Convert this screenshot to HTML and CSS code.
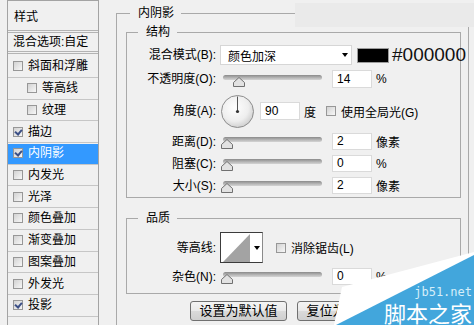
FILE: index.html
```html
<!DOCTYPE html>
<html lang="zh-CN">
<head>
    <meta charset="UTF-8">
    <title>图层样式 - 内阴影</title>
    <link rel="stylesheet" href="styles.css">
</head>
<body>
    <div class="dialog">
        <ul class="style-list">
            <li class="title">样式</li>
            <li class="title blend">混合选项:自定</li>
            <li class="bevel"><span class="cb"></span>斜面和浮雕</li>
            <li class="sub"><span class="cb"></span>等高线</li>
            <li class="sub"><span class="cb"></span>纹理</li>
            <li><span class="cb on"></span>描边</li>
            <li class="active"><span class="cb on"></span>内阴影</li>
            <li><span class="cb"></span>内发光</li>
            <li><span class="cb"></span>光泽</li>
            <li><span class="cb"></span>颜色叠加</li>
            <li><span class="cb"></span>渐变叠加</li>
            <li><span class="cb"></span>图案叠加</li>
            <li><span class="cb"></span>外发光</li>
            <li><span class="cb on"></span>投影</li>
        </ul>

        <div class="panel">
            <fieldset class="group outer">
                <legend>内阴影</legend>

                <fieldset class="group structure">
                    <legend>结构</legend>
                    <div class="row r-blend">
                        <span class="label">混合模式(B):</span>
                        <div class="select">颜色加深<span class="arrow"></span></div>
                        <span class="swatch"></span>
                        <span class="hex">#000000</span>
                    </div>
                    <div class="row r-opacity">
                        <span class="label">不透明度(O):</span>
                        <div class="slider" style="--v: 14">
                            <span class="track"></span>
                            <svg class="thumb" width="12" height="10" viewBox="0 0 12 10"><path d="M6 .5 11.5 5.5V9.5H.5V5.5Z" fill="#e2e2e2" stroke="#707070"/></svg>
                        </div>
                        <span class="num">14</span>
                        <span class="unit">%</span>
                    </div>
                    <div class="row r-angle">
                        <span class="label">角度(A):</span>
                        <svg class="dial" width="33" height="33" viewBox="0 0 33 33">
                            <defs>
                                <radialGradient id="dialFill" cx="42%" cy="38%" r="65%">
                                    <stop offset="0" stop-color="#ffffff"/>
                                    <stop offset="0.65" stop-color="#eeeeee"/>
                                    <stop offset="1" stop-color="#cdcdcd"/>
                                </radialGradient>
                            </defs>
                            <circle cx="16.5" cy="16.5" r="16" fill="url(#dialFill)" stroke="#8d8d8d"/>
                            <line x1="16.5" y1="16.5" x2="16.5" y2="1.5" stroke="#555"/>
                            <circle cx="16.5" cy="16.5" r="1.6" fill="#333"/>
                        </svg>
                        <span class="num tall">90</span>
                        <span class="unit">度</span>
                        <span class="cb global"></span>
                        <span>使用全局光(G)</span>
                    </div>
                    <div class="row r-distance">
                        <span class="label">距离(D):</span>
                        <div class="slider" style="--v: 0">
                            <span class="track"></span>
                            <svg class="thumb" width="12" height="10" viewBox="0 0 12 10"><path d="M6 .5 11.5 5.5V9.5H.5V5.5Z" fill="#e2e2e2" stroke="#707070"/></svg>
                        </div>
                        <span class="num">2</span>
                        <span class="unit">像素</span>
                    </div>
                    <div class="row r-choke">
                        <span class="label">阻塞(C):</span>
                        <div class="slider" style="--v: 0">
                            <span class="track"></span>
                            <svg class="thumb" width="12" height="10" viewBox="0 0 12 10"><path d="M6 .5 11.5 5.5V9.5H.5V5.5Z" fill="#e2e2e2" stroke="#707070"/></svg>
                        </div>
                        <span class="num">0</span>
                        <span class="unit">%</span>
                    </div>
                    <div class="row r-size">
                        <span class="label">大小(S):</span>
                        <div class="slider" style="--v: 0">
                            <span class="track"></span>
                            <svg class="thumb" width="12" height="10" viewBox="0 0 12 10"><path d="M6 .5 11.5 5.5V9.5H.5V5.5Z" fill="#e2e2e2" stroke="#707070"/></svg>
                        </div>
                        <span class="num">2</span>
                        <span class="unit">像素</span>
                    </div>
                </fieldset>

                <fieldset class="group quality">
                    <legend>品质</legend>
                    <div class="row r-contour">
                        <span class="label">等高线:</span>
                        <div class="contour">
                            <svg width="30" height="29" viewBox="0 0 30 29"><polygon points="2,29 29,1 29,29" fill="#a3a3a3"/></svg>
                            <span class="drop"><span class="arrow"></span></span>
                        </div>
                        <span class="cb smooth"></span>
                        <span>消除锯齿(L)</span>
                    </div>
                    <div class="row r-noise">
                        <span class="label">杂色(N):</span>
                        <div class="slider" style="--v: 0">
                            <span class="track"></span>
                            <svg class="thumb" width="12" height="10" viewBox="0 0 12 10"><path d="M6 .5 11.5 5.5V9.5H.5V5.5Z" fill="#e2e2e2" stroke="#707070"/></svg>
                        </div>
                        <span class="num">0</span>
                        <span class="unit">%</span>
                    </div>
                </fieldset>

                <div class="buttons">
                    <button class="btn">设置为默认值</button>
                    <button class="btn">复位为默认值</button>
                </div>
            </fieldset>
        </div>
    </div>

    <div class="top-patch"></div>

    <div class="watermark">
        <svg width="142" height="73" viewBox="0 0 142 73">
            <polygon points="142,0 10,35 2,73 142,73" fill="#ffffff"/>
            <polygon points="142,3 4,73 142,73" fill="#42a6dc"/>
        </svg>
        <span class="wm-site">jb51.net</span>
        <span class="wm-name">脚本之家</span>
    </div>
</body>
</html>
```

FILE: styles.css
```css
* {
    box-sizing: border-box;
}
body {
    margin: 0;
    width: 474px;
    height: 325px;
    overflow: hidden;
    position: relative;
    background-color: #f0f0f0;
    font-family: "Liberation Sans", "Noto Sans CJK SC", sans-serif;
    font-size: 12px;
    color: #000;
}
.dialog {
    display: flex;
    align-items: flex-start;
}

/* left style list */
.style-list {
    list-style: none;
    margin: 0 0 0 7px;
    padding: 0;
    width: 92px;
    height: 325px;
    flex-shrink: 0;
    border: 1px solid #a3a3a3;
    border-bottom: none;
}
.style-list li {
    display: flex;
    align-items: center;
    height: 21.7px;
    padding-left: 5px;
    border-bottom: 1px solid #c6c6c6;
    line-height: 14px;
    white-space: nowrap;
}
.style-list li.title {
    height: 32px;
    padding: 3px 0 0 6px;
    border-bottom: 3px double #b3b3b3;
}
.style-list li.blend {
    height: 21px;
    padding: 0 0 0 5px;
}
.style-list li.bevel {
    height: 24px;
}
.style-list li.sub {
    padding-left: 19px;
}
.style-list li.active {
    background-color: #3399ff;
    color: #fff;
    box-shadow: inset 0 1px 0 #f0f0f0;
}

.cb {
    position: relative;
    width: 10px;
    height: 10px;
    margin-right: 5px;
    flex-shrink: 0;
    border: 1px solid #979797;
    background: linear-gradient(135deg, #d2d2d2, #f7f7f7);
}
.cb.on::after {
    content: '';
    position: absolute;
    left: 2px;
    top: 0;
    width: 3px;
    height: 5px;
    border: solid #3b4f86;
    border-width: 0 2px 2px 0;
    transform: rotate(40deg);
}

/* right panel */
.panel {
    padding-left: 17px;
}
.group {
    margin: 0;
    padding: 0;
    min-width: 0;
    border: 1px solid #a9a9a9;
}
.group legend {
    padding: 0 7px 0 8px;
    line-height: 15px;
}
.outer {
    width: 353px;
    margin-top: 6px;
    padding: 4px 7px 10px 9px;
}
.outer > legend {
    margin-left: 4px;
}
.structure {
    padding: 5px 0 3px;
}
.structure > legend,
.quality > legend {
    margin-left: 11px;
}
.quality {
    margin-top: 13px;
    padding: 6px 0 8px;
}

.row {
    display: flex;
    align-items: center;
    white-space: nowrap;
}
.row > * {
    flex-shrink: 0;
}
.label {
    width: 89px;
    text-align: right;
    line-height: 14px;
}
.r-blend {
    height: 20px;
}
.r-opacity {
    height: 18px;
    margin-top: 5px;
}
.r-angle {
    height: 32px;
    margin-top: 7px;
}
.r-distance {
    height: 17px;
    margin-top: 6px;
}
.r-choke,
.r-size {
    height: 17px;
    margin-top: 5px;
}
.r-contour {
    height: 31px;
}
.r-noise {
    height: 17px;
    margin-top: 5px;
}

.select {
    display: flex;
    align-items: center;
    width: 132px;
    height: 20px;
    margin-left: 4px;
    padding: 0 3px 0 7px;
    background-color: #fff;
    border: 1px solid #d6d6d6;
}
.arrow {
    border-left: 3px solid transparent;
    border-right: 3px solid transparent;
    border-top: 4px solid #000;
}
.select .arrow {
    margin-left: auto;
}
.swatch {
    width: 32px;
    height: 15px;
    margin-left: 5px;
    background-color: #000;
    border: 1px solid #9c9c9c;
}
.hex {
    margin-left: 3px;
    font-size: 19px;
    line-height: 20px;
    color: #111;
}

.slider {
    position: relative;
    width: 101px;
    height: 17px;
    margin-left: 5px;
}
.slider .track {
    position: absolute;
    left: 2px;
    right: 0;
    top: 4px;
    height: 5px;
    border-radius: 3px;
    background: linear-gradient(#8a8a8a, #b9b9b9 60%, #d4d4d4);
}
.slider .thumb {
    position: absolute;
    top: 6px;
    left: calc((100% - 12px) * var(--v) / 100);
}

.num {
    width: 40px;
    height: 17px;
    margin-left: 10px;
    padding-left: 4px;
    background-color: #fff;
    border: 1px solid #dadada;
    line-height: 15px;
}
.r-opacity .num,
.num.tall {
    height: 18px;
    line-height: 16px;
}
.unit {
    margin-left: 4px;
}

.dial {
    display: block;
    margin-left: 5px;
}
.r-angle .num {
    margin-left: 6px;
}
.cb.global {
    margin-left: 10px;
}

.contour {
    display: flex;
    width: 43px;
    height: 31px;
    margin-left: 4px;
    background-color: #fff;
    border: 1px solid #3c3c3c;
    border-right-color: #8a8a8a;
}
.contour svg {
    display: block;
}
.contour .drop {
    flex: 1;
    display: flex;
    align-items: center;
    justify-content: center;
}
.cb.smooth {
    margin-left: 13px;
}

.buttons {
    display: flex;
    gap: 10px;
    margin: 7px 0 0 64px;
}
.btn {
    width: 97px;
    height: 20px;
    padding: 0;
    border: 1px solid #707070;
    border-radius: 3px;
    background: linear-gradient(#f4f4f4, #e9e9e9 50%, #dadada 51%, #cfcfcf);
    font-family: inherit;
    font-size: 13px;
    line-height: 16px;
    color: #000;
}

/* overlays */
.top-patch {
    position: absolute;
    left: 295px;
    top: 3px;
    width: 179px;
    height: 24px;
    background-color: #eaeaea;
}
.watermark {
    position: absolute;
    right: 0;
    bottom: 0;
    width: 142px;
    height: 73px;
}
.watermark svg {
    display: block;
}
.wm-site {
    position: absolute;
    right: 2px;
    top: 34px;
    font-family: "DejaVu Sans Mono", monospace;
    font-size: 12px;
    line-height: 12px;
    color: #d6eef9;
}
.wm-name {
    position: absolute;
    right: 2px;
    top: 49px;
    font-family: "Noto Sans CJK SC", sans-serif;
    font-size: 22px;
    line-height: 23px;
    color: #fff;
}
```
